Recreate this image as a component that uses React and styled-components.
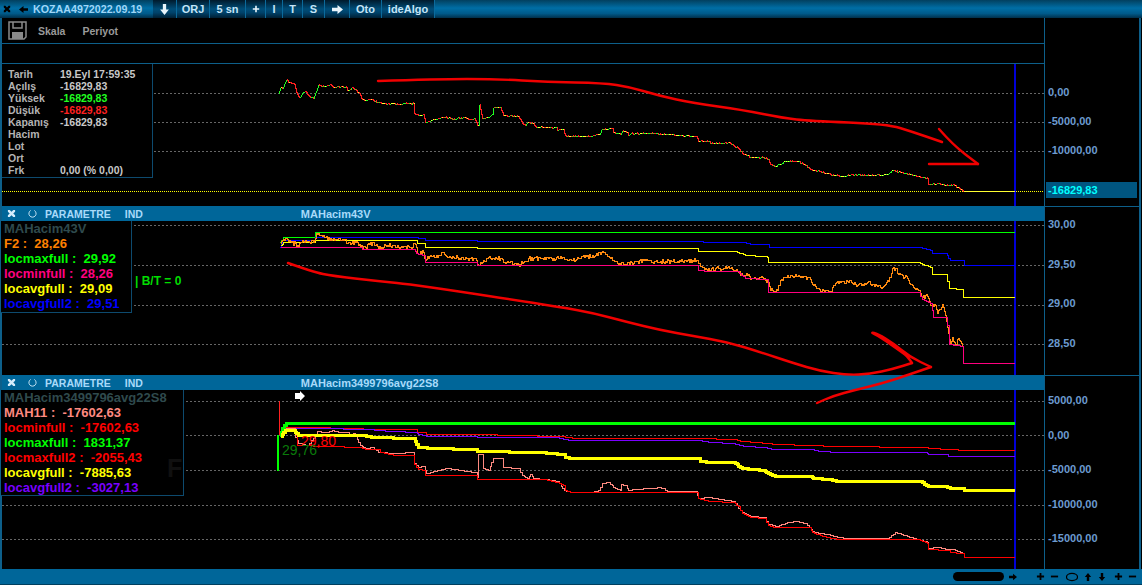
import React from 'react'
import styled, { createGlobalStyle } from 'styled-components'

const GlobalStyle = createGlobalStyle`
html, body {
    margin: 0;
    padding: 0;
    background: #000;
    overflow: hidden;
}
* {
    box-sizing: border-box;
}
`

const BLUE = '#006699'
const LINE = '#0d5f8a'

const Frame = styled.div`
position: relative;
width: 1142px;
height: 585px;
display: flex;
flex-direction: column;
background: #000;
font-family: "Liberation Sans", Arial, sans-serif;
font-weight: bold;
`
const TitleBar = styled.div`
height: 18px;
display: flex;
align-items: stretch;
background: linear-gradient(#02405f 0%, #006ea5 45%, #005a8a 75%, #012f4a 100%);
`
const TitleIcons = styled.div`
width: 33px;
display: flex;
align-items: center;
gap: 8px;
padding-left: 3px;
`
const TitleText = styled.div`
width: 120px;
font-size: 10.7px;
line-height: 19px;
color: #9fd6f7;
`
const ToolButton = styled.div`
width: ${p => p.$w}px;
display: flex;
align-items: center;
justify-content: center;
font-size: 11px;
color: #c4e4f7;
background: linear-gradient(#001a2c 0%, #004d78 50%, #00426a 70%, #001f33 100%);
border-right: 1px solid #0a6a9c;
`
const Pane = styled.div`
height: ${p => p.$h}px;
display: flex;
border-left: 2px solid ${LINE};
border-right: 2px solid ${LINE};
margin-right: 1px;
`
const PaneLeft = styled.div`
width: 1042px;
display: flex;
flex-direction: column;
`
const MenuBar = styled.div`
height: 26px;
display: flex;
align-items: center;
padding-left: 6px;
color: #9a9a9a;
font-size: 10.5px;
border-bottom: 1px solid ${LINE};
`
const MenuItem = styled.span`
margin-left: ${p => p.$ml}px;
`
const Band = styled.div`
height: 20px;
border-bottom: 1px solid ${LINE};
`
const PaneHeader = styled.div`
height: 15px;
display: flex;
align-items: center;
background: ${BLUE};
color: #a8daf9;
font-size: 10.5px;
`
const HeaderIcon = styled.span`
display: flex;
margin-left: ${p => p.$ml}px;
`
const HeaderText = styled.span`
margin-left: ${p => p.$ml}px;
font-size: ${p => p.$fs || 10.5}px;
white-space: nowrap;
`
const ChartArea = styled.div`
position: relative;
flex: 1;
min-height: 0;
`
const ChartSvg = styled.svg`
display: block;
width: 100%;
height: 100%;
`
const Axis = styled.div`
flex: 1;
display: flex;
flex-direction: column;
gap: ${p => p.$gap}px;
padding-top: ${p => p.$pt}px;
border-left: 1px solid ${LINE};
border-top: ${p => (p.$top ? `1px solid ${LINE}` : 'none')};
`
const Tick = styled.div`
height: 16px;
line-height: 16px;
padding-left: 3px;
font-size: 11px;
color: #6c9bd0;
white-space: nowrap;
`
const PriceTag = styled.div`
height: 16px;
line-height: 16px;
margin: 11px 2px 0 1px;
padding-left: 2px;
font-size: 11px;
color: #00ffff;
background: #005580;
`
const DataBox = styled.div`
position: absolute;
left: 0;
top: 0;
width: 151px;
height: 114px;
padding: 4px 0 0 6px;
background: #000;
border-right: 1px solid #0d4a6e;
border-bottom: 1px solid #0d4a6e;
font-size: 10.5px;
`
const DataRow = styled.div`
display: grid;
grid-template-columns: 52px 1fr;
height: 12px;
line-height: 12px;
color: #b4b4b4;
`
const DataValue = styled.span`
color: ${p => p.$c || '#c8c8c8'};
white-space: pre;
`
const Legend = styled.div`
position: absolute;
left: -1px;
top: 0;
width: ${p => p.$w}px;
height: ${p => p.$h}px;
padding: 0 0 0 3px;
background: #000;
border-right: 1px solid #0d4a6e;
border-bottom: 1px solid #0d4a6e;
font-size: 13px;
`
const LegendRow = styled.div`
height: 15px;
line-height: 15px;
color: ${p => p.$c};
white-space: pre;
`
const Note = styled.div`
position: absolute;
left: ${p => p.$x}px;
top: ${p => p.$y}px;
color: ${p => p.$c};
font-size: ${p => p.$fs}px;
font-weight: ${p => p.$fw || 'normal'};
line-height: 1;
white-space: pre;
`
const BottomBar = styled.div`
height: 16px;
display: flex;
align-items: center;
background: ${BLUE};
border-bottom: 1px solid #003f5f;
padding-left: 953px;
`
const ScrollThumb = styled.div`
width: 51px;
height: 9px;
border-radius: 5px;
background: #000;
margin-right: 5px;
`
const BarIcons = styled.div`
display: flex;
align-items: center;
margin-left: ${p => p.$ml}px;
gap: ${p => p.$gap}px;
`
const Marks = styled.svg`
position: absolute;
left: 0;
top: 0;
width: 1142px;
height: 585px;
pointer-events: none;
`

// pseudo random, always the same between runs
const rnd = (i) => {
    const s = Math.sin(i * 12.9898) * 43758.5453
    return s - Math.floor(s)
}

const parse = (str) => str.trim().split(/\s+/).map(p => p.split(',').map(Number))

// turn a rough point list into a stepped pixel line
const stair = (str, wobble = 0, step = 2) => {
    const pts = parse(str)
    const out = []
    pts.forEach(([x, y], i) => {
        if (i === 0) {
            out.push([x, y])
            return
        }
        const [x0, y0] = pts[i - 1]
        const n = Math.max(1, Math.round((x - x0) / step))
        for (let k = 1; k <= n; k++) {
            const nx = Math.round(x0 + ((x - x0) * k) / n)
            let ny = y0 + ((y - y0) * k) / n
            if (wobble && k < n) ny += (rnd(nx + i) - 0.5) * wobble
            out.push([nx, Math.round(ny)])
        }
    })
    return out
}

const stepPath = (pts) => pts.map(([x, y], i) => {
    if (i === 0) return `M${x} ${y}`
    return `H${x}V${y}`
}).join('')

const smooth = (str) => {
    const pts = parse(str)
    let d = `M${pts[0][0]} ${pts[0][1]}`
    for (let i = 1; i < pts.length - 1; i++) {
        const mx = (pts[i][0] + pts[i + 1][0]) / 2
        const my = (pts[i][1] + pts[i + 1][1]) / 2
        d += `Q${pts[i][0]} ${pts[i][1]} ${mx} ${my}`
    }
    const last = pts[pts.length - 1]
    return `${d}L${last[0]} ${last[1]}`
}

const PRICE = `278,93 280,87 282,88 286,79 289,82 294,84 296,92 299,97 302,92 305,91 307,94 313,98 315,92 318,84 323,86 330,84 333,87 340,86 346,87 347,90 352,87 358,92 361,98 365,100 372,99 377,102 383,103 393,103 398,104 403,103 414,103 414,113 418,115 423,114 425,122 433,119 440,117 448,117 455,119 457,117 467,118 468,119 474,118 477,125 479,125 479,104 482,118 488,117 492,114 493,107 500,107 503,115 518,116 522,123 525,125 527,122 533,123 535,126 548,127 556,127 557,130 563,129 565,135 575,136 590,136 595,134 599,134 601,129 612,128 613,132 620,134 622,130 627,132 628,135 630,133 653,133 667,134 677,135 696,136 698,141 707,141 712,143 720,143 728,142 733,145 738,148 742,153 750,157 763,157 768,159 770,164 775,166 785,161 798,161 805,165 810,169 820,171 830,174 843,176 850,174 870,175 887,174 892,170 900,172 917,176 927,178 928,184 937,183 947,185 952,184 958,187 964,191`

const P2_GREEN = '279,242 283,237 315,237 315,232 1014,232'
const P2_BLUE = '279,247 282,240 315,240 315,237 416,237 418,238 424,238 425,240 477,240 477,241 698,241 707,242 742,242 752,244 767,244 769,247 920,247 932,250 932,253 945,253 950,260 962,260 964,265 1014,265'
const P2_YELLOW = '280,245 283,242 313,242 315,240 415,240 417,243 424,243 425,247 477,247 477,248 698,248 698,251 735,251 745,255 765,256 768,258 768,262 918,262 932,268 932,274 945,274 949,288 962,289 963,297 1014,297'
const P2_PINK = '280,247 360,247 362,249 413,249 416,253 424,255 425,262 476,262 477,265 697,265 698,270 708,271 737,271 745,278 767,279 768,292 918,292 922,299 930,303 933,317 945,317 947,325 949,344 962,346 963,363 1014,363'
const P2_ORANGE = '280,243 285,238 290,241 297,245 302,240 313,242 316,233 323,235 332,239 345,239 347,243 357,242 360,246 365,247 373,242 378,248 385,245 410,247 415,244 417,253 423,252 425,260 430,255 435,257 442,252 450,257 470,258 475,258 477,264 487,258 500,258 503,262 520,264 528,258 553,258 560,256 567,260 580,258 592,255 603,252 613,260 623,264 643,260 660,261 677,261 697,260 700,266 707,270 715,268 730,268 738,272 747,275 752,278 762,277 768,282 770,290 777,290 780,280 790,275 808,277 813,285 820,291 830,291 835,283 850,280 857,285 867,282 882,287 890,277 892,268 895,268 898,274 907,278 913,287 918,290 922,297 927,296 930,305 935,305 937,313 942,304 945,315 948,333 950,344 952,337 955,345 958,338 962,345'

const P3_GREEN = '279,435 284,425 286,423 1014,423'
const P3_RED2 = '280,435 285,427 297,427 362,428 363,429 415,429 417,432 425,432 426,434 477,434 557,436 572,437 572,438 698,438 733,439 742,441 768,443 774,444 813,445 831,446 925,447 930,448 950,449 964,450 1014,450'
const P3_PURPLE = '280,436 285,428 313,428 373,429 374,430 395,431 415,432 418,434 425,435 426,436 477,436 477,437 557,437 565,439 570,440 698,440 710,442 733,443 745,446 765,447 773,449 810,449 820,451 838,452 925,452 928,454 947,454 948,456 963,456 1014,456'
const P3_YELLOW = '280,436 285,430 293,430 298,435 362,435 373,437 413,438 418,447 425,447 427,448 477,449 477,451 540,452 550,453 563,454 565,457 572,458 698,458 700,461 710,462 733,462 742,468 763,470 768,473 775,476 810,476 813,478 830,479 838,481 920,481 928,486 945,486 950,488 962,488 964,490 1014,490'
const P3_SALMON = '280,434 285,428 294,428 295,437 298,443 307,445 313,438 317,431 325,432 332,430 340,432 347,432 350,435 353,433 360,445 365,448 372,447 378,452 395,453 413,452 414,463 418,467 423,466 426,473 433,471 447,468 460,470 475,472 477,477 478,454 482,454 483,468 488,470 493,458 502,458 503,467 518,468 522,475 527,478 530,474 533,478 545,479 557,481 564,490 572,492 590,492 598,490 602,483 608,482 615,488 620,490 621,484 625,485 628,490 632,489 653,488 657,487 663,488 667,491 695,491 698,498 708,497 720,499 733,501 742,512 750,516 764,517 768,524 777,526 787,522 797,521 805,523 809,527 812,531 820,533 828,534 837,537 847,538 887,538 895,532 907,536 918,539 927,542 928,548 937,547 947,549 953,549 962,553'
const P3_RED = '295,435 297,445 360,447 365,449 378,449 380,452 395,455 413,455 414,464 418,469 424,470 425,475 477,475 477,479 545,479 557,482 563,485 565,490 572,492 697,492 698,498 710,501 733,502 738,506 742,513 750,517 764,518 768,525 775,527 809,527 812,532 820,535 832,538 838,539 918,539 927,543 928,549 948,550 950,552 962,553 964,557 1014,557'

const Grid = ({ ys }) => ys.map(y => (
    <line key={y} x1="2" x2="1044" y1={y + 0.5} y2={y + 0.5} stroke="#666" strokeDasharray="2 2" shapeRendering="crispEdges" />
))

const CursorLine = ({ y1, y2 }) => (
    <rect x="1014" y={y1} width="2" height={y2 - y1} fill="#0000d8" />
)

const StepLine = ({ points, color, width = 1, wobble = 0, step = 2 }) => (
    <path
        d={stepPath(stair(points, wobble, step))}
        transform={width % 2 ? 'translate(0.5 0.5)' : undefined}
        fill="none"
        stroke={color}
        strokeWidth={width}
        shapeRendering="crispEdges"
    />
)

// price line: up bars green, down bars red, flat ones yellow or mixed
const TickLine = ({ points }) => {
    const pts = stair(points, 1.4, 1)
    const groups = { '#ff2020': '', '#20ff20': '', '#ffff30': '' }
    pts.forEach(([x, y], i) => {
        if (i === 0) return
        const [px, py] = pts[i - 1]
        let c = '#ff2020'
        if (y < py) c = '#20ff20'
        else if (y === py) {
            const r = rnd(x)
            c = r < 0.4 ? '#ffff30' : r < 0.65 ? '#20ff20' : '#ff2020'
        }
        groups[c] += `M${px} ${py}H${x}V${y}`
    })
    return Object.keys(groups).map(c => (
        <path key={c} d={groups[c]} transform="translate(0.5 0.5)" fill="none" stroke={c} shapeRendering="crispEdges" />
    ))
}

const Glyph = ({ kind, size = 9, color = '#000' }) => {
    const shapes = {
        close: <path d="M1 1l2 0 2 2 2-2 2 0 0 2-2 2 2 2 0 2-2 0-2-2-2 2-2 0 0-2 2-2-2-2z" fill={color} />,
        left: <path d="M0 5l5-4v2.5h5v3h-5V9z" fill={color} />,
        right: <path d="M10 5L5 1v2.5H0v3h5V9z" fill={color} />,
        up: <path d="M5 0l4 5H6.5v5h-3V5H1z" fill={color} />,
        down: <path d="M5 10l4-5H6.5V0h-3v5H1z" fill={color} />,
        plus: <path d="M4 1h2v3h3v2H6v3H4V6H1V4h3z" fill={color} />,
        minus: <path d="M1 4h8v2H1z" fill={color} />,
        oval: <ellipse cx="5" cy="5" rx="4.6" ry="3" fill="none" stroke={color} />,
        refresh: <path d="M3 1.6A4 4 0 1 0 7 1.6" fill="none" stroke={color} />,
    }
    return (
        <svg width={size} height={size} viewBox="0 0 10 10" style={{ display: 'block' }}>
            {shapes[kind]}
        </svg>
    )
}

const Floppy = () => (
    <svg width="19" height="19" viewBox="0 0 19 19" style={{ display: 'block' }}>
        <path d="M1 1h17v15l-2 2H1z" fill="none" stroke="#8a8a8a" strokeWidth="1.5" />
        <path d="M5 1v6h9V1" fill="none" stroke="#8a8a8a" strokeWidth="1.5" />
        <path d="M4 18v-7h11v7" fill="#8a8a8a" />
    </svg>
)

const PaneHead = ({ title }) => (
    <PaneHeader>
        <HeaderIcon $ml={5}><Glyph kind="close" color="#d4ecfb" /></HeaderIcon>
        <HeaderIcon $ml={12}><Glyph kind="refresh" color="#d4ecfb" /></HeaderIcon>
        <HeaderText $ml={8}>PARAMETRE</HeaderText>
        <HeaderText $ml={14}>IND</HeaderText>
        <HeaderText $ml={158} $fs={11}>{title}</HeaderText>
    </PaneHeader>
)

const dataRows = [
    ['Tarih', '19.Eyl 17:59:35'],
    ['Açılış', '-16829,83'],
    ['Yüksek', '-16829,83', '#20ff20'],
    ['Düşük', '-16829,83', '#ff2020'],
    ['Kapanış', '-16829,83'],
    ['Hacim', ''],
    ['Lot', ''],
    ['Ort', ''],
    ['Frk', '0,00 (% 0,00)'],
]

const legend2 = [
    ['MAHacim43V', '#2f4a4d'],
    ['F2 :  28,26', '#ff8000'],
    ['locmaxfull :  29,92', '#00ff00'],
    ['locminfull :  28,26', '#ff0080'],
    ['locavgfull :  29,09', '#ffff00'],
    ['locavgfull2 :  29,51', '#0000ff'],
]

const legend3 = [
    ['MAHacim3499796avg22S8', '#2f4a4d'],
    ['MAH11 :  -17602,63', '#ff8a80'],
    ['locminfull :  -17602,63', '#ff0000'],
    ['locmaxfull :  1831,37', '#00ff00'],
    ['locmaxfull2 :  -2055,43', '#ff0000'],
    ['locavgfull :  -7885,63', '#ffff00'],
    ['locavgfull2 :  -3027,13', '#7a00ff'],
]

const tools = [
    [24, <Glyph key="d" kind="down" size={11} color="#e8f4fb" />],
    [33, 'ORJ'],
    [36, '5 sn'],
    [20, <Glyph key="p" kind="plus" size={8} color="#e8f4fb" />],
    [17, 'I'],
    [20, 'T'],
    [22, 'S'],
    [25, <Glyph key="r" kind="right" size={11} color="#e8f4fb" />],
    [32, 'Oto'],
    [53, 'ideAlgo'],
]

const App = () => (
    <Frame>
        <GlobalStyle />
        <TitleBar>
            <TitleIcons>
                <Glyph kind="close" size={8} />
                <Glyph kind="left" size={9} />
            </TitleIcons>
            <TitleText>KOZAA4972022.09.19</TitleText>
            {tools.map(([w, label], i) => <ToolButton key={i} $w={w}>{label}</ToolButton>)}
        </TitleBar>

        <Pane $h={188}>
            <PaneLeft>
                <MenuBar>
                    <Floppy />
                    <MenuItem $ml={11}>Skala</MenuItem>
                    <MenuItem $ml={17}>Periyot</MenuItem>
                </MenuBar>
                <Band />
                <ChartArea>
                    <ChartSvg viewBox="2 64 1042 142">
                        <Grid ys={[93, 122, 151]} />
                        <line x1="2" x2="1044" y1="191.5" y2="191.5" stroke="#ffff00" strokeDasharray="1 1" shapeRendering="crispEdges" />
                        <CursorLine y1={64} y2={206} />
                        <TickLine points={PRICE} />
                        <rect x="964" y="191" width="51" height="1" fill="#ffff30" />
                    </ChartSvg>
                    <DataBox>
                        {dataRows.map(([label, value, c]) => (
                            <DataRow key={label}>
                                <span>{label}</span>
                                <DataValue $c={c}>{value}</DataValue>
                            </DataRow>
                        ))}
                    </DataBox>
                </ChartArea>
            </PaneLeft>
            <Axis $pt={66} $gap={13}>
                <Tick>0,00</Tick>
                <Tick>-5000,00</Tick>
                <Tick>-10000,00</Tick>
                <PriceTag>-16829,83</PriceTag>
            </Axis>
        </Pane>

        <Pane $h={169}>
            <PaneLeft>
                <PaneHead title="MAHacim43V" />
                <ChartArea>
                    <ChartSvg viewBox="2 221 1042 154">
                        <Grid ys={[225, 265, 305, 344]} />
                        <CursorLine y1={221} y2={375} />
                        <StepLine points={P2_GREEN} color="#00ff00" />
                        <StepLine points={P2_BLUE} color="#0000ff" />
                        <StepLine points={P2_YELLOW} color="#ffff00" />
                        <StepLine points={P2_ORANGE} color="#ff8a10" wobble={4} step={1} />
                        <StepLine points={P2_PINK} color="#ff0080" />
                    </ChartSvg>
                    <Legend $w={131} $h={92}>
                        {legend2.map(([text, c]) => <LegendRow key={text} $c={c}>{text}</LegendRow>)}
                    </Legend>
                    <Note $x={133} $y={54} $c="#00dd00" $fs={12} $fw="bold">| B/T = 0</Note>
                </ChartArea>
            </PaneLeft>
            <Axis $top $pt={9} $gap={23.67}>
                <Tick>30,00</Tick>
                <Tick>29,50</Tick>
                <Tick>29,00</Tick>
                <Tick>28,50</Tick>
            </Axis>
        </Pane>

        <Pane $h={194}>
            <PaneLeft>
                <PaneHead title="MAHacim3499796avg22S8" />
                <ChartArea>
                    <ChartSvg viewBox="2 390 1042 179">
                        <Grid ys={[401, 435, 470, 505, 539]} />
                        <CursorLine y1={390} y2={569} />
                        <rect x="279" y="401" width="1" height="34" fill="#ff2020" />
                        <rect x="277" y="435" width="2" height="36" fill="#00ff00" />
                        <StepLine points={P3_RED2} color="#ff0000" />
                        <StepLine points={P3_PURPLE} color="#7a00ff" />
                        <StepLine points={P3_SALMON} color="#ff8a80" />
                        <StepLine points={P3_RED} color="#ff0000" />
                        <StepLine points={P3_GREEN} color="#00ff00" width={3} />
                        <StepLine points={P3_YELLOW} color="#ffff00" width={3} />
                        <path d="M295 393h5v-2l5 5-5 5v-2h-5z" fill="#fff" />
                    </ChartSvg>
                    <Legend $w={183} $h={106}>
                        {legend3.map(([text, c]) => <LegendRow key={text} $c={c}>{text}</LegendRow>)}
                    </Legend>
                    <Note $x={165} $y={66} $c="#101010" $fs={25} $fw="bold">F</Note>
                    <Note $x={299} $y={44} $c="#ff0000" $fs={14}>29,80</Note>
                    <Note $x={280} $y={53} $c="#0a7a0a" $fs={14}>29,76</Note>
                </ChartArea>
            </PaneLeft>
            <Axis $top $pt={16} $gap={18.5}>
                <Tick>5000,00</Tick>
                <Tick>0,00</Tick>
                <Tick>-5000,00</Tick>
                <Tick>-10000,00</Tick>
                <Tick>-15000,00</Tick>
            </Axis>
        </Pane>

        <BottomBar>
            <ScrollThumb />
            <Glyph kind="right" size={8} />
            <BarIcons $ml={19} $gap={5}>
                <Glyph kind="plus" />
                <Glyph kind="minus" />
            </BarIcons>
            <BarIcons $ml={7} $gap={6}>
                <Glyph kind="oval" size={12} />
                <Glyph kind="up" size={8} />
                <Glyph kind="down" size={8} />
            </BarIcons>
            <BarIcons $ml={8} $gap={5}>
                <Glyph kind="plus" />
                <Glyph kind="minus" />
            </BarIcons>
        </BottomBar>

        {/* hand drawn red marks, they run over the panes */}
        <Marks viewBox="0 0 1142 585">
            <g fill="none" stroke="#f00000" strokeWidth="2.4" strokeLinecap="round" strokeLinejoin="round">
                <path d={smooth('378,81 437,79 497,79 547,82 603,83 630,87 660,96 693,103 743,110 783,118 810,121 887,124 913,132 942,142')} />
                <path d={smooth('939,129 953,145 978,164')} />
                <path d="M978 164H929" />
                <path d={smooth('288,263 313,272 333,276 377,281 417,285 560,307 593,313 627,322 660,330 693,336 727,342 760,352 793,363 820,371 847,375 870,374 893,369 912,363')} />
                <path d={smooth('912,363 908,357 903,353 880,337 870,332 878,334 893,343 910,357 931,367')} />
                <path d={smooth('931,367 905,376 880,384 855,390 833,396 817,403')} />
            </g>
        </Marks>
    </Frame>
)

export default App
